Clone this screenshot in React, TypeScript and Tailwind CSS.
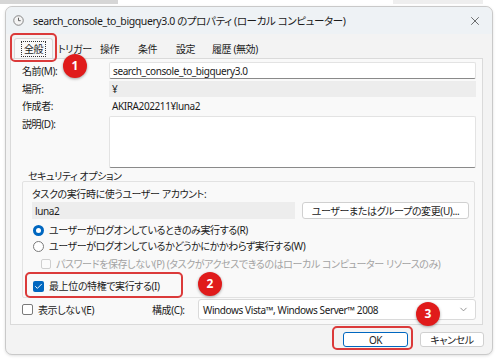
import { ChevronDown, X, Check } from "lucide-react";

const FONT = "'Noto Sans', 'Noto Sans CJK JP', sans-serif";

const tabs = [
  { label: "トリガー", w: "w-[42px]" },
  { label: "操作", w: "w-[38px]" },
  { label: "条件", w: "w-[38px]" },
  { label: "設定", w: "w-[36px]" },
  { label: "履歴 (無効)", w: "w-[64px]" },
];

function Badge({ n, className }: { n: number; className: string }) {
  return (
    <div
      className={`absolute w-[24px] h-[24px] rounded-full bg-[#e01b1b] text-white text-[12px] font-bold tracking-normal flex items-center justify-center shadow-[0_1px_3px_rgba(0,0,0,0.35)] ${className}`}
    >
      {n}
    </div>
  );
}

function Radio({ checked }: { checked?: boolean }) {
  return checked ? (
    <span className="w-[11px] h-[11px] rounded-full bg-[#0067c0] flex items-center justify-center shrink-0">
      <span className="w-[5px] h-[5px] rounded-full bg-white" />
    </span>
  ) : (
    <span className="w-[11px] h-[11px] rounded-full border border-[#7a7a7a] bg-white shrink-0" />
  );
}

export default function App() {
  return (
    <div
      className="relative w-[501px] h-[363px] bg-white overflow-hidden whitespace-nowrap text-[10px] leading-[14px] tracking-[-0.4px] text-[#1b1b1b] [font-feature-settings:'palt']"
      style={{ fontFamily: FONT }}
    >
      {/* crop remnants along the top */}
      <div className="flex h-[4px]">
        <div className="w-[118px] bg-[#d6d6d6]" />
        <div className="w-[275px]" />
        <div className="w-[90px] bg-[#eeeeee]" />
      </div>

      <div className="ml-[5px] mt-[2px] w-[488px] h-[349px] rounded-[7px] border border-[#c9c9c9] bg-[#f3f3f3] shadow-[0_1px_3px_rgba(0,0,0,0.12)]">
        {/* title bar */}
        <div className="h-[27px] flex items-center pl-[7px] pr-[10px] bg-[#eef2f5] rounded-t-[7px]">
          <svg width="11" height="11" viewBox="0 0 12 12" className="shrink-0">
            <circle cx="6" cy="6" r="5.2" fill="#f4f4f4" stroke="#7d7d7d" strokeWidth="1" />
            <path d="M6 3v3.2h2.4" fill="none" stroke="#555" strokeWidth="1" />
          </svg>
          <span className="ml-[9px] text-[10.5px]">
            search_console_to_bigquery3.0 のプロパティ (ローカル コンピューター)
          </span>
          <X size={14} strokeWidth={1.2} className="ml-auto text-[#333]" />
        </div>

        {/* tabs */}
        <div className="h-[24px] flex items-end pl-[8px]">
          <div className="w-[39px] h-[20px] bg-[#f9f9f9] border border-b-0 border-[#d9d9d9] rounded-t-[3px] flex items-center justify-center">
            <span className="px-[2px] leading-[14px] border border-dotted border-[#333]">全般</span>
          </div>
          {tabs.map((t) => (
            <div key={t.label} className={`${t.w} h-[19px] pl-[5px] flex items-center`}>
              {t.label}
            </div>
          ))}
        </div>

        {/* tab panel */}
        <div className="ml-[4px] w-[473px] h-[267px] border border-[#dadada] bg-[#f9f9f9] pl-[11px] pr-[6px] pt-[3px]">
          <div className="h-[17px] flex items-center">
            <span className="w-[87px]">名前(M):</span>
            <div className="flex-1 h-full bg-white border border-[#e3e3e3] border-b-[#8a8a8a] rounded-[2px] pl-[3px] flex items-center">
              search_console_to_bigquery3.0
            </div>
          </div>
          <div className="mt-[2px] h-[16px] flex items-center">
            <span className="w-[87px]">場所:</span>
            <div className="flex-1 h-full bg-[#ededed] pl-[3px] flex items-center">¥</div>
          </div>
          <div className="mt-[1px] h-[16px] flex items-center">
            <span className="w-[87px]">作成者:</span>
            <span className="pl-[3px]">AKIRA202211¥luna2</span>
          </div>
          <div className="mt-[2px] h-[52px] flex items-start">
            <span className="w-[87px] pt-[1px]">説明(D):</span>
            <div className="flex-1 h-[52px] bg-white border border-[#e3e3e3] border-b-[#8a8a8a] rounded-[2px]" />
          </div>

          {/* security options */}
          <div className="mt-[3px] h-[10px] leading-[10px] pl-[6px]">セキュリティ オプション</div>
          <div className="h-[117px] mr-[1px] border border-[#e2e2e2] rounded-[2px] pl-[9px] pt-[5px]">
            <div className="h-[14px] flex items-center">タスクの実行時に使うユーザー アカウント:</div>
            <div className="mt-[1px] h-[17px] flex items-center">
              <div className="w-[263px] h-[17px] bg-[#ededed] pl-[3px] flex items-center">luna2</div>
              <div className="ml-[7px] w-[167px] h-[17px] bg-white border border-[#d0d0d0] rounded-[3px] flex items-center justify-center">
                ユーザーまたはグループの変更(U)...
              </div>
            </div>
            <div className="mt-[4px] h-[14px] flex items-center gap-[5px] pl-[1px]">
              <Radio checked />
              <span>ユーザーがログオンしているときのみ実行する(R)</span>
            </div>
            <div className="mt-[2px] h-[14px] flex items-center gap-[5px] pl-[1px]">
              <Radio />
              <span>ユーザーがログオンしているかどうかにかかわらず実行する(W)</span>
            </div>
            <div className="mt-[4px] h-[14px] flex items-center gap-[5px] pl-[9px] text-[#a3a3a3]">
              <span className="w-[10px] h-[10px] border border-[#cfcfcf] rounded-[2px] bg-[#fbfbfb] shrink-0" />
              <span>パスワードを保存しない(P) (タスクがアクセスできるのはローカル コンピューター リソースのみ)</span>
            </div>
            <div className="mt-[8px] h-[14px] flex items-center gap-[5px] pl-[1px]">
              <span className="w-[11px] h-[11px] rounded-[2px] bg-[#0067c0] flex items-center justify-center shrink-0">
                <Check size={9} strokeWidth={2.5} className="text-white" />
              </span>
              <span>最上位の特権で実行する(I)</span>
            </div>
          </div>

          <div className="mt-[1px] h-[21px] flex items-center">
            <span className="w-[11px] h-[11px] border border-[#7a7a7a] rounded-[2px] bg-white shrink-0" />
            <span className="ml-[5px] w-[114px]">表示しない(E)</span>
            <span>構成(C):</span>
            <div className="ml-auto w-[278px] h-full bg-white border border-[#dadada] rounded-[3px] pl-[4px] pr-[6px] flex items-center">
              <span>Windows Vista™, Windows Server™ 2008</span>
              <ChevronDown size={11} className="ml-auto text-[#8a8a8a]" />
            </div>
          </div>
        </div>

        {/* dialog buttons */}
        <div className="mt-[7px] flex justify-end pr-[8px] gap-[12px]">
          <div className="w-[65px] h-[15px] bg-white border border-[#0067c0] rounded-[3px] flex items-center justify-center">
            OK
          </div>
          <div className="w-[64px] h-[15px] bg-white border border-[#d0d0d0] rounded-[3px] flex items-center justify-center">
            キャンセル
          </div>
        </div>
      </div>

      {/* annotations */}
      <div className="absolute left-[10px] top-[33px] w-[47px] h-[29px] border-2 border-[#db3a3a] rounded-[5px]" />
      <Badge n={1} className="left-[63px] top-[54px]" />
      <div className="absolute left-[25px] top-[272px] w-[158px] h-[26px] border-2 border-[#db3a3a] rounded-[5px]" />
      <Badge n={2} className="left-[198px] top-[272px]" />
      <div className="absolute left-[332px] top-[326px] w-[81px] h-[24px] border-2 border-[#db3a3a] rounded-[5px]" />
      <Badge n={3} className="left-[416px] top-[302px]" />
    </div>
  );
}
